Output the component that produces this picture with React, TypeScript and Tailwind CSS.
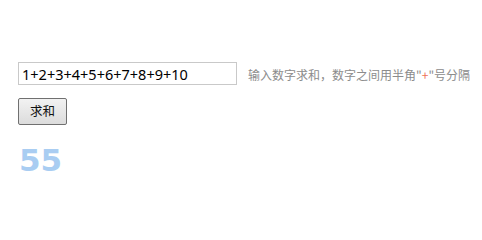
import React from "react";

export default function App() {
  return (
    <div className="w-[482px] h-[218px] bg-white pl-[18px] pt-[62px] font-['Noto_Sans','Noto_Sans_CJK_SC',sans-serif]">
      <div className="flex items-center">
        <input
          readOnly
          value="1+2+3+4+5+6+7+8+9+10"
          className="w-[219px] h-[23px] border border-[#c9c9c9] bg-white pl-[3px] text-[14.5px] text-black outline-none font-['Noto_Sans',sans-serif]"
        />
        <span className="ml-[11px] mt-[3px] text-[12px] leading-none text-[#8c8c8c] whitespace-nowrap font-['Noto_Sans_CJK_SC',sans-serif]">
          输入数字求和，数字之间用半角"<span className="text-[#ee7055]">+</span>"号分隔
        </span>
      </div>
      <button className="mt-[13px] w-[49px] h-[27px] border border-[#707070] rounded-[2px] bg-gradient-to-b from-[#f2f2f2] to-[#dcdcdc] text-[12.5px] text-[#111] leading-none font-['Noto_Sans_CJK_SC',sans-serif]">
        求和
      </button>
      <div className="mt-[20px] ml-[1px] text-[31px] font-bold leading-none text-[#a9cdf2] font-['DejaVu_Sans',sans-serif]">
        55
      </div>
    </div>
  );
}
